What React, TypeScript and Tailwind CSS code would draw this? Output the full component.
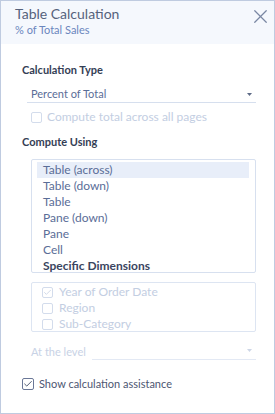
import { Check, X } from 'lucide-react';

const FONT = { fontFamily: 'Lato, "Liberation Sans", sans-serif' };

const METHODS = ['Table (across)', 'Table (down)', 'Table', 'Pane (down)', 'Pane', 'Cell'];
const DIMENSIONS = [
  { label: 'Year of Order Date', checked: true },
  { label: 'Region', checked: false },
  { label: 'Sub-Category', checked: false },
];

function Caret({ muted }: { muted?: boolean }) {
  return (
    <svg width="5" height="3" viewBox="0 0 5 3" className="shrink-0">
      <path d="M0 0h5L2.5 3z" fill={muted ? '#cdd6e6' : '#5d6a86'} />
    </svg>
  );
}

export default function App() {
  return (
    <div
      style={FONT}
      className="w-[275px] h-[414px] border border-[#bfcbe0] bg-white flex flex-col overflow-hidden"
    >
      {/* header */}
      <div className="h-[43px] bg-[#f5f8fd] flex items-start justify-between pl-[14px] pr-[2px] pt-[4px]">
        <div className="flex flex-col">
          <span className="text-[14px] leading-[18px] text-[#56627c]">Table Calculation</span>
          <span className="text-[11px] leading-[14px] text-[#6b86bd]">% of Total Sales</span>
        </div>
        <X className="w-[23px] h-[23px] text-[#7a87a3]" strokeWidth={1.3} />
      </div>

      <div className="flex flex-col pl-[21px] pr-[18px]">
        <div className="mt-[19px] text-[11px] leading-[14px] font-bold text-[#343e55]">
          Calculation Type
        </div>

        <div className="ml-[5px] mt-[9px] h-[17px] border-b border-[#d6dfee] flex items-center justify-between pl-[4px] pr-[4px]">
          <span className="text-[11px] text-[#5a6d97]">Percent of Total</span>
          <Caret />
        </div>

        <div className="ml-[9px] mt-[7px] flex items-center gap-[5px]">
          <span className="w-[11px] h-[11px] border border-[#d3dcec] rounded-[2px]" />
          <span className="text-[12px] leading-[14px] text-[#c3cee2]">
            Compute total across all pages
          </span>
        </div>

        <div className="mt-[11px] text-[11px] leading-[14px] font-bold text-[#343e55]">
          Compute Using
        </div>

        <div className="ml-[9px] mt-[10px] h-[114px] border border-[#d7e0ef] rounded-[2px] pl-[5px] pr-[6px] pt-[2px]">
          {METHODS.map((m, i) => (
            <div
              key={m}
              className={`h-[16px] flex items-center pl-[6px] text-[12px] text-[#5a6d97] ${
                i === 0 ? 'bg-[#e8eef9]' : ''
              }`}
            >
              {m}
            </div>
          ))}
          <div className="h-[16px] flex items-center pl-[6px] text-[12px] font-bold text-[#3a4560]">
            Specific Dimensions
          </div>
        </div>

        <div className="ml-[9px] mt-[9px] h-[50px] border border-[#dde5f2] rounded-[2px] pl-[10px] pt-[1px]">
          {DIMENSIONS.map((d) => (
            <div key={d.label} className="h-[16px] flex items-center gap-[6px]">
              <span className="w-[11px] h-[11px] border border-[#d3dcec] rounded-[2px] flex items-center justify-center">
                {d.checked && <Check className="w-[9px] h-[9px] text-[#c3cee2]" strokeWidth={2} />}
              </span>
              <span className="text-[12px] text-[#c3cee2]">{d.label}</span>
            </div>
          ))}
        </div>

        <div className="ml-[9px] mt-[10px] flex items-end gap-[6px]">
          <span className="text-[11px] leading-[16px] text-[#c8d2e5]">At the level</span>
          <div className="flex-1 h-[18px] border-b border-[#e3e9f4] flex items-center justify-end pr-[4px]">
            <Caret muted />
          </div>
        </div>

        <div className="mt-[17px] flex items-center gap-[5px]">
          <span className="w-[12px] h-[12px] border border-[#6a7797] rounded-[2px] flex items-center justify-center">
            <Check className="w-[10px] h-[10px] text-[#3f4b66]" strokeWidth={2.2} />
          </span>
          <span className="text-[11px] leading-[14px] text-[#4d5672]">Show calculation assistance</span>
        </div>
      </div>
    </div>
  );
}
